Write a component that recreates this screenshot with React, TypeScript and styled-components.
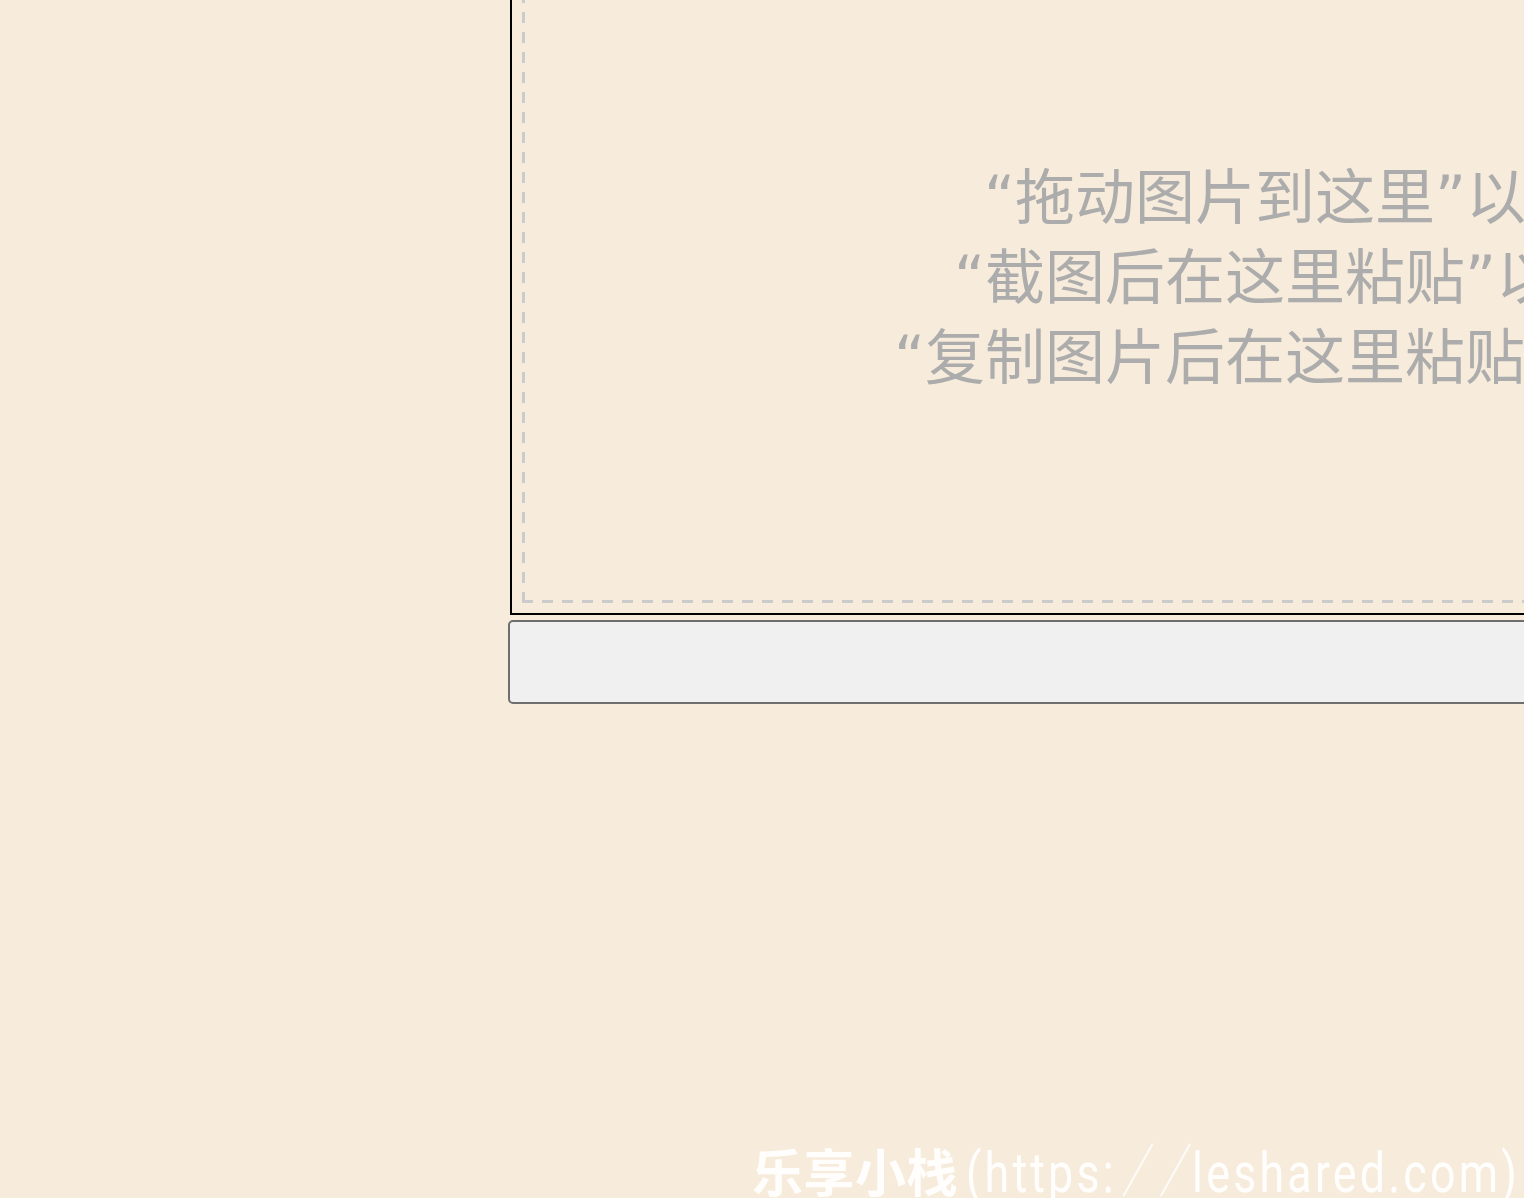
import React from "react";
import styled, { createGlobalStyle } from "styled-components";

const GlobalStyle = createGlobalStyle`
  html, body {
    margin: 0;
    padding: 0;
    background: #f7ecdb;
    overflow: hidden;
  }
  * { box-sizing: border-box; }
`;

const Page = styled.div`
  position: relative;
  width: 1524px;
  height: 1198px;
  overflow: hidden;
  padding-left: 510px;
  background: #f7ecdb;
`;

const Column = styled.div`
  width: 1610px;
  margin-top: -60px;
  display: flex;
  flex-direction: column;
`;

const DropZone = styled.div`
  border: 2px solid #000;
  padding: 10px;
  width: 100%;
`;

const dash = "#cbcbcb";

const DashedArea = styled.div`
  height: 651px;
  display: flex;
  align-items: center;
  justify-content: center;
  background-image:
    linear-gradient(to top, ${dash} 0 11px, transparent 11px 20px),
    linear-gradient(to top, ${dash} 0 11px, transparent 11px 20px),
    linear-gradient(to right, ${dash} 0 11px, transparent 11px 20px),
    linear-gradient(to right, ${dash} 0 11px, transparent 11px 20px);
  background-size: 3px 20px, 3px 20px, 20px 3px, 20px 3px;
  background-position: left bottom, right bottom, left bottom, left top;
  background-repeat: repeat-y, repeat-y, repeat-x, repeat-x;
`;

const Hint = styled.div`
  font-family: "DejaVu Sans", "Noto Sans CJK SC", sans-serif;
  font-size: 60px;
  line-height: 80px;
  color: #acacac;
  text-align: center;
  white-space: nowrap;
`;

const ActionBar = styled.button`
  margin-top: 5px;
  margin-left: -2px;
  height: 84px;
  width: calc(100% + 2px);
  background: #f0f0f0;
  border: 2px solid #6e6e6e;
  border-radius: 5px;
  padding: 0;
`;

const Watermark = styled.div`
  position: absolute;
  left: 752px;
  bottom: 1px;
  white-space: nowrap;
  color: rgba(255, 255, 255, 0.93);
  height: 60px;
  display: flex;
  align-items: baseline;
`;

const MarkName = styled.span`
  font-family: "Noto Sans CJK SC", sans-serif;
  font-weight: 700;
  font-size: 51px;
  line-height: 60px;
  letter-spacing: 0.5px;
`;

const MarkUrl = styled.span`
  display: inline-block;
  margin-left: 8px;
  font-family: Roboto, "Liberation Sans", sans-serif;
  font-weight: 400;
  font-size: 56px;
  line-height: 60px;
  letter-spacing: 4px;
  transform: scaleX(0.8);
  transform-origin: left center;
`;

const Slash = styled.span`
  display: inline-block;
  font-family: "Noto Sans CJK SC", sans-serif;
  font-weight: 400;
  font-size: 58px;
  letter-spacing: -11px;
  transform: scaleX(0.7);
  transform-origin: 40% center;
`;

export default function App() {
  return (
    <>
      <GlobalStyle />
      <Page>
        <Column>
          <DropZone>
            <DashedArea>
              <Hint>
                “拖动图片到这里”以上传
                <br />
                “截图后在这里粘贴”以上传
                <br />
                “复制图片后在这里粘贴”以上传
              </Hint>
            </DashedArea>
          </DropZone>
          <ActionBar type="button" aria-label="upload" />
        </Column>
        <Watermark>
          <MarkName>乐享小栈</MarkName>
          <MarkUrl>
            (https:<Slash>／</Slash>
            <Slash>／</Slash>leshared.com)
          </MarkUrl>
        </Watermark>
      </Page>
    </>
  );
}
